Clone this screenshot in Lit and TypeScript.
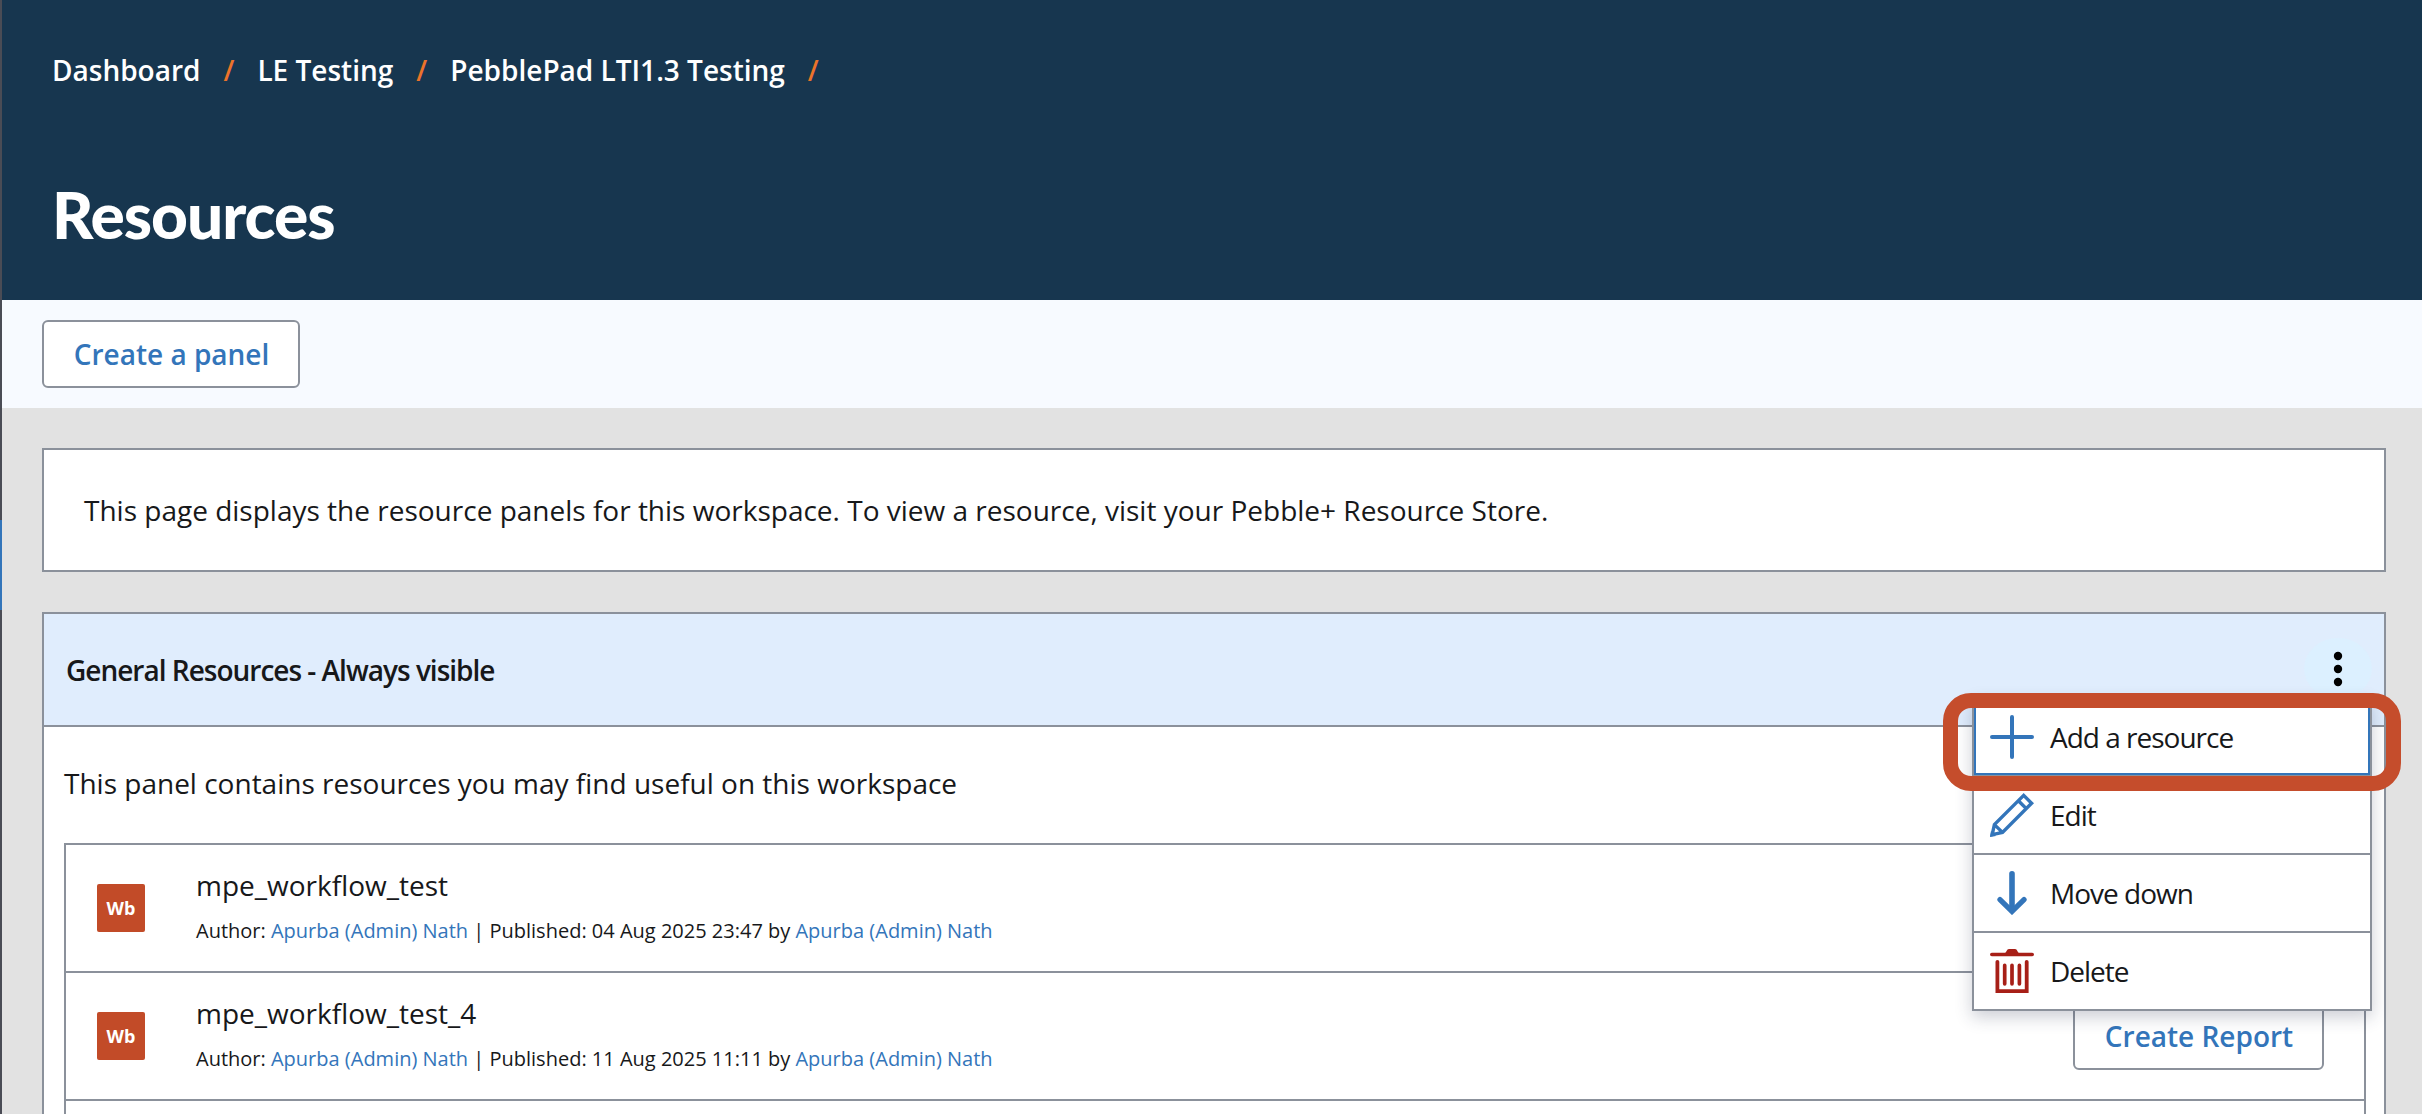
import { LitElement, html, svg, css, nothing } from "lit";
import { customElement, property } from "lit/decorators.js";
import { classMap } from "lit/directives/class-map.js";

interface Resource {
  title: string;
  author: string;
  published: string;
  report: boolean;
}

const CRUMBS = ["Dashboard", "LE Testing", "PebblePad LTI1.3 Testing"];

const RESOURCES: Resource[] = [
  { title: "mpe_workflow_test", author: "Apurba (Admin) Nath", published: "04 Aug 2025 23:47", report: false },
  { title: "mpe_workflow_test_4", author: "Apurba (Admin) Nath", published: "11 Aug 2025 11:11", report: true },
];

const ICONS = {
  plus: svg`<path d="M2 22H42M22 2V42" stroke-width="4" stroke-linecap="round"/>`,
  pencil: svg`<path d="M33.7 2.4 41.6 10.3 12.5 39.4 2.2 41.6 4.4 31.6ZM28.4 7.7 36.3 15.6M4.4 31.6 12.5 39.4" stroke-width="3.4"/>
    <path d="M0 44 1 38 6 43Z" fill="currentColor" stroke="none"/>`,
  down: svg`<path d="M22 2.8V39" stroke-width="5.6" stroke-linecap="round"/>
    <path d="M10 28.6 22 40.4 34 28.6" stroke-width="5.3" stroke-linecap="round"/>`,
  trash: svg`<path d="M1.8 5.5H42.2" stroke-width="3.6" stroke-linecap="round"/>
    <path d="M14.5 4.5C16.5 3.5 16.6 0 19 0H25C27.4 0 27.5 3.5 29.5 4.5Z" fill="currentColor" stroke="none"/>
    <path d="M7.4 12.8V42.1H36.7V12.8" stroke-width="3.8" stroke-linecap="round"/>
    <path d="M14.7 16.4V34.8M22 16.4V34.8M29.4 16.4V34.8" stroke-width="3.7" stroke-linecap="round"/>`,
};

type IconName = keyof typeof ICONS;

@customElement("action-menu")
class ActionMenu extends LitElement {
  static styles = css`
    :host {
      display: block;
      width: 400px;
      box-sizing: border-box;
      border: 2px solid #8b919b;
      background: #fff;
      box-shadow: 0 6px 16px rgba(40, 50, 80, 0.24);
    }
    .item {
      box-sizing: border-box;
      height: 76px;
      display: flex;
      align-items: center;
      gap: 16px;
      padding-left: 16px;
      font-size: 28px;
      letter-spacing: -1px;
      color: #17181a;
      white-space: nowrap;
    }
    .item + .item {
      height: 78px;
      border-top: 2px solid #8b919b;
    }
    .focused {
      outline: 2px solid #3375ba;
      outline-offset: -2px;
    }
    .icon {
      width: 44px;
      height: 44px;
      color: #3375ba;
      flex: none;
    }
    .danger {
      color: #a71f17;
    }
  `;

  items: { icon: IconName; label: string }[] = [
    { icon: "plus", label: "Add a resource" },
    { icon: "pencil", label: "Edit" },
    { icon: "down", label: "Move down" },
    { icon: "trash", label: "Delete" },
  ];

  render() {
    return this.items.map(
      (item, i) => html`<div class=${classMap({ item: true, focused: i === 0 })}>
        <svg class=${classMap({ icon: true, danger: item.icon === "trash" })} viewBox="0 0 44 44" fill="none" stroke="currentColor">${ICONS[item.icon]}</svg>
        <span>${item.label}</span>
      </div>`
    );
  }
}

@customElement("resource-row")
class ResourceRow extends LitElement {
  static styles = css`
    :host {
      display: flex;
      align-items: center;
      height: 126px;
      padding: 0 40px 0 31px;
      border-bottom: 2px solid #8b919b;
    }
    .badge {
      width: 48px;
      height: 48px;
      border-radius: 2px;
      background: #c24b28;
      color: #fff;
      font-size: 18px;
      font-weight: 700;
      line-height: 48px;
      text-align: center;
    }
    .text {
      flex: 1;
      margin-left: 51px;
      padding-bottom: 5px;
      white-space: nowrap;
    }
    .title {
      font-size: 28px;
      line-height: 38px;
    }
    .meta {
      margin-top: 13px;
      font-size: 20px;
      line-height: 28px;
    }
    .link {
      color: #3375ba;
    }
    .button {
      box-sizing: border-box;
      width: 251px;
      height: 68px;
      padding-left: 1px;
      border: 2px solid #8b919b;
      border-radius: 6px;
      background: #fff;
      color: #3375ba;
      font-size: 28px;
      font-weight: 600;
      line-height: 64px;
      text-align: center;
    }
  `;

  @property({ attribute: false }) resource!: Resource;

  render() {
    const r = this.resource;
    return html`
      <div class="badge">Wb</div>
      <div class="text">
        <div class="title">${r.title}</div>
        <div class="meta">Author: <span class="link">${r.author}</span> | Published: ${r.published} by <span class="link">${r.author}</span></div>
      </div>
      ${r.report ? html`<div class="button">Create Report</div>` : nothing}
    `;
  }
}

@customElement("app-root")
class AppRoot extends LitElement {
  static styles = css`
    :host {
      display: flex;
      position: relative;
      height: 1114px;
      overflow: hidden;
      font-family: "Open Sans", "Noto Sans", sans-serif;
      color: #17181a;
      background: #e2e2e2;
    }
    .rail {
      width: 2px;
      flex: none;
      background: #4a4c55;
      padding-top: 520px;
      box-sizing: border-box;
    }
    .thumb {
      height: 90px;
      background: #3375ba;
    }
    .page {
      flex: 1;
      display: flex;
      flex-direction: column;
      min-width: 0;
    }
    .header {
      box-sizing: border-box;
      height: 300px;
      flex: none;
      padding: 51px 0 0 50px;
      background: #17364f;
      color: #fff;
    }
    .crumbs {
      display: flex;
      gap: 23px;
      font-size: 28px;
      font-weight: 600;
      line-height: 38px;
    }
    .slash {
      color: #ec732a;
    }
    .heading {
      margin: 86px 0 0;
      font-family: Lato, sans-serif;
      font-size: 64px;
      font-weight: 900;
      line-height: 80px;
      letter-spacing: -1px;
    }
    .toolbar {
      box-sizing: border-box;
      height: 108px;
      flex: none;
      padding: 20px 0 0 40px;
      background: #f7faff;
    }
    .button {
      box-sizing: border-box;
      width: 258px;
      height: 68px;
      padding-left: 1px;
      border: 2px solid #8b919b;
      border-radius: 6px;
      background: #fff;
      color: #3375ba;
      font-size: 28px;
      font-weight: 600;
      line-height: 64px;
      text-align: center;
    }
    .main {
      flex: 1;
      display: flex;
      flex-direction: column;
      gap: 40px;
      padding: 40px 36px 0 40px;
      min-height: 0;
    }
    .notice {
      border: 2px solid #8b919b;
      background: #fff;
      padding: 0 40px;
      font-size: 28px;
      line-height: 120px;
    }
    .panel {
      flex: 1;
      display: flex;
      flex-direction: column;
      min-height: 0;
      border: 2px solid #8b919b;
      border-bottom: 0;
      background: #fff;
    }
    .panel-head {
      display: flex;
      align-items: center;
      justify-content: space-between;
      height: 111px;
      flex: none;
      padding: 0 12px 0 22px;
      border-bottom: 2px solid #8b919b;
      background: #e0edfd;
      font-size: 28px;
      font-weight: 600;
      letter-spacing: -1px;
    }
    .more {
      width: 68px;
      height: 61px;
      margin-bottom: 2px;
      border-radius: 50%;
      background: #dcf0ff;
    }
    .body {
      flex: 1;
      display: flex;
      flex-direction: column;
      padding: 37px 18px 0 20px;
      min-height: 0;
    }
    .desc {
      font-size: 28px;
      line-height: 38px;
      margin-bottom: 41px;
    }
    .list {
      flex: 1;
      border: 2px solid #8b919b;
      border-bottom: 0;
      min-height: 0;
    }
    .menu {
      position: absolute;
      left: 1972px;
      top: 697px;
    }
    .highlight {
      position: absolute;
      left: 1943px;
      top: 693px;
      width: 458px;
      height: 98px;
      box-sizing: border-box;
      border: 15px solid #c54d2c;
      border-radius: 28px;
    }
  `;

  render() {
    return html`
      <div class="rail"><div class="thumb"></div></div>
      <div class="page">
        <div class="header">
          <div class="crumbs">${CRUMBS.map((c) => html`<span>${c}</span><span class="slash">/</span>`)}</div>
          <h1 class="heading">Resources</h1>
        </div>
        <div class="toolbar"><div class="button">Create a panel</div></div>
        <div class="main">
          <div class="notice">This page displays the resource panels for this workspace. To view a resource, visit your Pebble+ Resource Store.</div>
          <div class="panel">
            <div class="panel-head">
              <span>General Resources - Always visible</span>
              <svg class="more" viewBox="0 0 68 61"><circle cx="34" cy="18" r="4.2"/><circle cx="34" cy="31" r="4.2"/><circle cx="34" cy="44" r="4.2"/></svg>
            </div>
            <div class="body">
              <div class="desc">This panel contains resources you may find useful on this workspace</div>
              <div class="list">${RESOURCES.map((r) => html`<resource-row .resource=${r}></resource-row>`)}</div>
            </div>
          </div>
        </div>
      </div>
      <action-menu class="menu"></action-menu>
      <div class="highlight"></div>
    `;
  }
}
